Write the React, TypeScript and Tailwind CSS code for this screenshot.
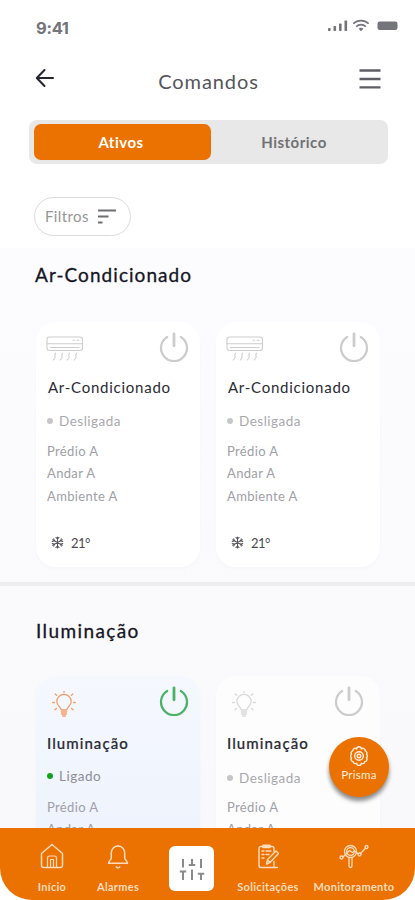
import { useState } from 'react'
import type { ReactNode } from 'react'

type Device = {
  id: number
  name: string
  status: string
  places: string[]
  on?: boolean
  temp?: string
}

const airDevices: Device[] = [
  { id: 1, name: 'Ar-Condicionado', status: 'Desligada', places: ['Prédio A', 'Andar A', 'Ambiente A'], temp: '21°' },
  { id: 2, name: 'Ar-Condicionado', status: 'Desligada', places: ['Prédio A', 'Andar A', 'Ambiente A'], temp: '21°' },
]

const lightDevices: Device[] = [
  { id: 3, name: 'Iluminação', status: 'Ligado', places: ['Prédio A', 'Andar A'], on: true },
  { id: 4, name: 'Iluminação', status: 'Desligada', places: ['Prédio A', 'Andar A'] },
]

function PowerIcon({ className }: { className: string }) {
  return (
    <svg viewBox="0 0 30 30" className={`h-[30px] w-[30px] ${className}`} fill="none" stroke="currentColor" strokeWidth="2.2" strokeLinecap="round">
      <path d="M8.2 5A13 13 0 1 0 21.8 5" />
      <path d="M15 1.800v12" strokeWidth="2.8" />
    </svg>
  )
}

function AirIcon() {
  return (
    <svg viewBox="0 0 38 26" className="h-[26px] w-[38px] text-[#cdcdcd]" fill="none" stroke="currentColor" strokeWidth="1.1" strokeLinecap="round" strokeLinejoin="round">
      <rect x="1" y="1" width="35.500" height="13.5" rx="2.5" />
      <path d="M1 7.8h35.500M4.5 11.500h28.500M27 4.3h1.5M31 4.3h2" />
      <path d="M9.500 17.200c-1.800 2.200.8 3-1 5.300l-1.300 1.500M16.500 17.200c-1.800 2.200.8 3-1 5.300l-1.300 1.500M23.500 17.200c-1.800 2.200.8 3-1 5.300l-1.300 1.500M30.500 17.200c-1.800 2.200.8 3-1 5.300l-1.300 1.500" />
    </svg>
  )
}

function BulbIcon({ className }: { className: string }) {
  return (
    <svg viewBox="0 0 24 26" className={`h-[26px] w-[24px] ${className}`} fill="none" stroke="currentColor" strokeWidth="1.3" strokeLinecap="round" strokeLinejoin="round">
      <path d="M9.2 19c0-3-4.400-4.300-4.400-8.400a7.200 7.200 0 0 1 14.400 0c0 4.100-4.400 5.400-4.400 8.400z" />
      <path d="M9.400 21h5.200M9.700 23h4.600M10.800 25h2.400" strokeWidth="1.600" />
      <path d="M12 .3v1.400M3.200 2.900l1.400 1.300M20.800 2.900l-1.400 1.300M.6 11.500h1.900M21.500 11.500h1.900M2.900 18.700l1.500-1.300M21.100 18.700l-1.500-1.300" />
    </svg>
  )
}

function SnowIcon() {
  return (
    <svg viewBox="0 0 14 14" className="h-[13px] w-[13px] text-[#55555c]" fill="none" stroke="currentColor" strokeWidth="1.100" strokeLinecap="round">
      <path d="M7 1v12M1.800 4l10.400 6M1.800 10l10.400-6" />
      <path d="M5.300 1.600L7 3.300l1.700-1.700M5.300 12.400L7 10.700l1.700 1.700M1.300 6l2.300-.7L3 3M12.700 8l-2.300.7.600 2.300M1.300 8l2.300.7L3 11M12.700 6l-2.300-.7L11 3" />
    </svg>
  )
}

function DeviceCard({ device, icon }: { device: Device; icon: ReactNode }) {
  const light = !device.temp
  return (
    <div
      className={`flex h-[245px] w-[164px] flex-col rounded-[20px] px-[11px] shadow-[0_2px_4px_rgba(40,40,80,0.02)] ${
        device.on ? 'bg-linear-to-b from-[#f5f8ff] to-[#eaf0fb]' : light ? 'bg-[#fdfdfe]' : 'bg-white'
      }`}
    >
      <div className={`flex h-[54px] items-start justify-between pt-[10px] ${light && !device.on ? 'pr-[5px]' : ''}`}>
        <div className={light ? 'ml-[5px] mt-[5px]' : '-ml-px mt-[4px]'}>{icon}</div>
        <PowerIcon className={device.on ? 'text-[#4bb266]' : 'text-[#cccccc]'} />
      </div>
      <p
        className={`whitespace-nowrap leading-[24px] text-[#2b2b33] ${
          light ? 'mt-px text-[15px] font-medium tracking-[1.050px] [-webkit-text-stroke:0.2px_#2b2b33]' : '-mt-px pl-px text-[15px] tracking-[0.750px]'
        }`}
      >
        {device.name}
      </p>
      <div className={`flex items-center gap-[6px] ${light && !device.on ? 'mt-[12px]' : light ? 'mt-[10px]' : 'mt-[11px]'}`}>
        <span className={`h-[6px] w-[6px] rounded-full ${device.on ? 'bg-[#14a11c]' : 'bg-[#c6c6c6]'}`} />
        <span className={`text-[13.500px] leading-[22px] tracking-[0.500px] ${device.on ? 'text-[#8c8e94]' : 'text-[#a9a9ad]'}`}>{device.status}</span>
      </div>
      <div className={`text-[13px] leading-[22.300px] tracking-[0.350px] text-[#a0a0a6] ${light && !device.on ? 'mt-[7px]' : light ? 'mt-[9px]' : 'mt-[8px]'}`}>
        {device.places.map((place) => (
          <p key={place}>{place}</p>
        ))}
      </div>
      {device.temp && (
        <div className="mt-[26px] flex items-center gap-[7px] pl-[4px]">
          <SnowIcon />
          <span className="text-[13px] leading-[20px] tracking-[-0.500px] text-[#4a4a50]">{device.temp}</span>
        </div>
      )}
    </div>
  )
}

function StatusBar() {
  return (
    <div className="flex h-[52px] items-start justify-between pl-[36px] pr-[17px] pt-[17px] text-[#74747b]">
      <span className="font-['Inter',sans-serif] text-[16.500px] font-bold leading-[22px] tracking-[-0.300px]">9:41</span>
      <svg viewBox="0 0 70 14" className="mt-px h-[14px] w-[70px]" fill="currentColor">
        <rect x="0" y="10" width="2.600" height="3" rx=".7" />
        <rect x="5.500" y="8" width="2.600" height="5" rx=".7" />
        <rect x="11" y="5.500" width="2.600" height="7.500" rx=".7" />
        <rect x="16.500" y="2.500" width="2.600" height="10.500" rx=".7" />
        <g fill="none" stroke="currentColor" strokeWidth="1.700">
          <path d="M25.300 5.700a11 11 0 0 1 15.400 0M28.200 8.600a7 7 0 0 1 9.600 0" />
        </g>
        <path d="M30.600 10.800a3.800 3.800 0 0 1 4.800 0L33 13.200z" />
        <rect x="49.500" y="3.500" width="20" height="8.500" rx="2.300" />
      </svg>
    </div>
  )
}

function NavItem({ label, className, children }: { label: string; className: string; children: ReactNode }) {
  return (
    <button type="button" className={`flex flex-col items-center text-[#ffdcbd] ${className}`}>
      <span className="flex h-[28px] items-center">{children}</span>
      <span className="mt-[10px] whitespace-nowrap text-[11px] font-bold leading-[14px] tracking-[0.300px]">{label}</span>
    </button>
  )
}

function BottomNav() {
  return (
    <nav className="flex h-[72px] shrink-0 items-start rounded-b-[32px] bg-[#eb7100] pt-[14px]">
      <NavItem label="Início" className="ml-[31px] w-[42px]">
        <svg viewBox="0 0 24 26" className="h-[26px] w-[24px]" fill="none" stroke="currentColor" strokeWidth="1.500" strokeLinejoin="round">
          <path d="M1.500 10.500L12 1.500l10.500 9v12a2 2 0 0 1-2 2h-17a2 2 0 0 1-2-2z" />
          <path d="M7.500 24.500v-9.500a2 2 0 0 1 2-2h5a2 2 0 0 1 2 2v9.500M10.500 24.500v-8h3v8" strokeWidth="1.200" />
        </svg>
      </NavItem>
      <NavItem label="Alarmes" className="ml-[20px] w-[50px]">
        <svg viewBox="0 0 22 26" className="h-[26px] w-[22px]" fill="none" stroke="currentColor" strokeWidth="1.500" strokeLinecap="round" strokeLinejoin="round">
          <path d="M11 2.500v.500M4.300 9.700a6.700 6.700 0 0 1 13.400 0v5.300c0 1.500 2.800 3.300 2.800 5.200h-19c0-1.900 2.800-3.700 2.800-5.200z" />
          <path d="M9.300 24c.6 1 2.800 1 3.400 0" />
        </svg>
      </NavItem>
      <button type="button" className="ml-[26px] mt-[4px] flex h-[45px] w-[45px] items-center justify-center rounded-[6px] bg-white text-[#8a8a8d]">
        <svg viewBox="0 0 26 24" className="h-[24px] w-[26px]" fill="none" stroke="currentColor" strokeWidth="2">
          <path d="M4 2v8.500M4 14v9M13 2v6M13 12.500V23M22 2v9M22 16v7" />
          <path d="M.800 14.500h6.400M9.800 8h6.400M18.800 16.800h6.400" />
        </svg>
      </button>
      <NavItem label="Solicitações" className="ml-[22px] w-[64px]">
        <svg viewBox="0 0 22 25" className="h-[25px] w-[22px]" fill="none" stroke="currentColor" strokeWidth="1.400" strokeLinecap="round" strokeLinejoin="round">
          <path d="M17 7.500V4.500a2 2 0 0 0-2-2H4a2 2 0 0 0-2 2v17a2 2 0 0 0 2 2h16.500M17 17.500v6" />
          <path d="M6 1.300h7v2.200H6zM5 7h2M9 7h5M5 10.500h2M9 10.500h3M5 14h2" />
          <path d="M9.500 20l1-4.500 8.500-8.500 2.500 2.500L13 18.500zM10.500 15.500l2.500 3" />
        </svg>
      </NavItem>
      <NavItem label="Monitoramento" className="ml-[13px] w-[82px]">
        <svg viewBox="0 0 30 26" className="h-[26px] w-[30px]" fill="none" stroke="currentColor" strokeWidth="1.300" strokeLinecap="round" strokeLinejoin="round">
          <circle cx="11.500" cy="8.500" r="6" />
          <circle cx="11.500" cy="8.500" r="3.800" />
          <path d="M10 14.500v8.500a1.500 1.500 0 0 0 3 0v-8.500" />
          <circle cx="2.500" cy="14.500" r="1.500" />
          <circle cx="20.500" cy="11.500" r="1.500" />
          <circle cx="27.500" cy="4" r="1.500" />
          <path d="M4 14l6.500-6.500 3 2 2-1.500 3.700 2.700M21.500 10.500l5-5.300" />
        </svg>
      </NavItem>
    </nav>
  )
}

export default function App() {
  const [tab, setTab] = useState<'ativos' | 'historico'>('ativos')

  return (
    <div className="relative flex h-[900px] w-[415px] flex-col overflow-hidden bg-white font-['Lato','Liberation_Sans',sans-serif]">
      <StatusBar />

      <header className="flex h-[68px] shrink-0 items-start justify-between pl-[35px] pr-[34px]">
        <svg viewBox="0 0 20 20" className="mt-[16px] h-[20px] w-[20px] text-[#252530]" fill="none" stroke="currentColor" strokeWidth="2" strokeLinecap="round" strokeLinejoin="round">
          <path d="M18 10H2M9.500 2L1.800 10l7.700 8" />
        </svg>
        <h1 className="ml-[3px] mt-[16px] text-[20px] leading-[26px] tracking-[0.900px] text-[#55555c]">Comandos</h1>
        <svg viewBox="0 0 22 20" className="mt-[17px] h-[20px] w-[22px] text-[#5e5e64]" fill="none" stroke="currentColor" strokeWidth="2.300">
          <path d="M.5 1.500h21M.5 10h21M.5 18.300h21" />
        </svg>
      </header>

      {/* Abas */}
      <div className="ml-[29px] flex h-[44px] w-[359px] shrink-0 rounded-[8px] bg-[#e8e8e8] py-[4px] pl-[5px]">
        <button
          type="button"
          onClick={() => setTab('ativos')}
          className={`w-[177px] rounded-[7px] pr-[3px] text-[15px] font-bold tracking-[0.500px] ${tab === 'ativos' ? 'bg-[#eb7100] text-white' : 'text-[#6d6d70]'}`}
        >
          Ativos
        </button>
        <button
          type="button"
          onClick={() => setTab('historico')}
          className={`w-[166px] rounded-[7px] text-[15px] font-bold tracking-[0.500px] ${tab === 'historico' ? 'bg-[#eb7100] text-white' : 'text-[#717174]'}`}
        >
          Histórico
        </button>
      </div>

      {/* Filtros */}
      <button type="button" className="ml-[34px] mt-[33px] flex h-[39px] w-[97px] shrink-0 items-center gap-[9px] rounded-full border border-[#dcdcdc] pl-[10px] text-[#959597]">
        <span className="text-[15px] tracking-[0.400px]">Filtros</span>
        <svg viewBox="0 0 18 15" className="h-[15px] w-[18px] text-[#6f6f72]" fill="none" stroke="currentColor" strokeWidth="2">
          <path d="M0 1.500h18M0 7.500h10.500M0 13.500h4.500" />
        </svg>
      </button>

      <main className="mt-[12px] min-h-0 flex-1 overflow-hidden bg-linear-to-b from-[#fcfcff] to-[#f9f9fc]">
        <section className="h-[334px] pt-[13px]">
          <h2 className="pl-[35px] text-[19px] leading-[28px] tracking-[1.050px] text-[#15151f] [-webkit-text-stroke:0.300px_#15151f]">Ar-Condicionado</h2>
          <div className="mt-[33px] flex gap-[16px] pl-[36px]">
            {airDevices.map((d) => (
              <DeviceCard key={d.id} device={d} icon={<AirIcon />} />
            ))}
          </div>
        </section>
        <div className="h-[4px] bg-[#ededf0]" />
        <section className="pt-[31px]">
          <h2 className="pl-[36px] text-[19px] leading-[28px] tracking-[1.400px] text-[#15151f] [-webkit-text-stroke:0.300px_#15151f]">Iluminação</h2>
          <div className="mt-[31px] flex gap-[16px] pl-[36px]">
            {lightDevices.map((d) => (
              <DeviceCard key={d.id} device={d} icon={<BulbIcon className={d.on ? 'text-[#f3a06a]' : 'text-[#d9d9d9]'} />} />
            ))}
          </div>
        </section>
      </main>

      <BottomNav />

      {/* Botão flutuante */}
      <button type="button" className="absolute left-[329px] top-[737px] flex h-[60px] w-[60px] flex-col items-center rounded-full bg-[#eb7100] pt-[9px] text-[#ffeedd] shadow-[0_4px_4px_rgba(0,0,0,0.45)]">
        <svg viewBox="0 0 20 20" className="h-[20px] w-[20px]" fill="none" stroke="currentColor" strokeWidth="1.400" strokeLinejoin="round">
          <path d="M7.700 3a2.300 2.300 0 0 1 4.600 0 2.300 2.300 0 0 1 3.900 1.800 2.300 2.300 0 0 1 1.300 3.500 2.300 2.300 0 0 1 0 3.600 2.300 2.300 0 0 1-1.600 3.700 2.300 2.300 0 0 1-3.600 1.600 2.300 2.300 0 0 1-4.600 0 2.300 2.300 0 0 1-3.600-1.600 2.300 2.300 0 0 1-1.600-3.700 2.300 2.300 0 0 1 0-3.600 2.300 2.300 0 0 1 1.300-3.500A2.300 2.300 0 0 1 7.700 3z" />
          <circle cx="10" cy="10" r="4.300" />
          <circle cx="10" cy="10" r="1.800" />
        </svg>
        <span className="text-[11.500px] leading-[18px] tracking-[0.300px]">Prisma</span>
      </button>
    </div>
  )
}
